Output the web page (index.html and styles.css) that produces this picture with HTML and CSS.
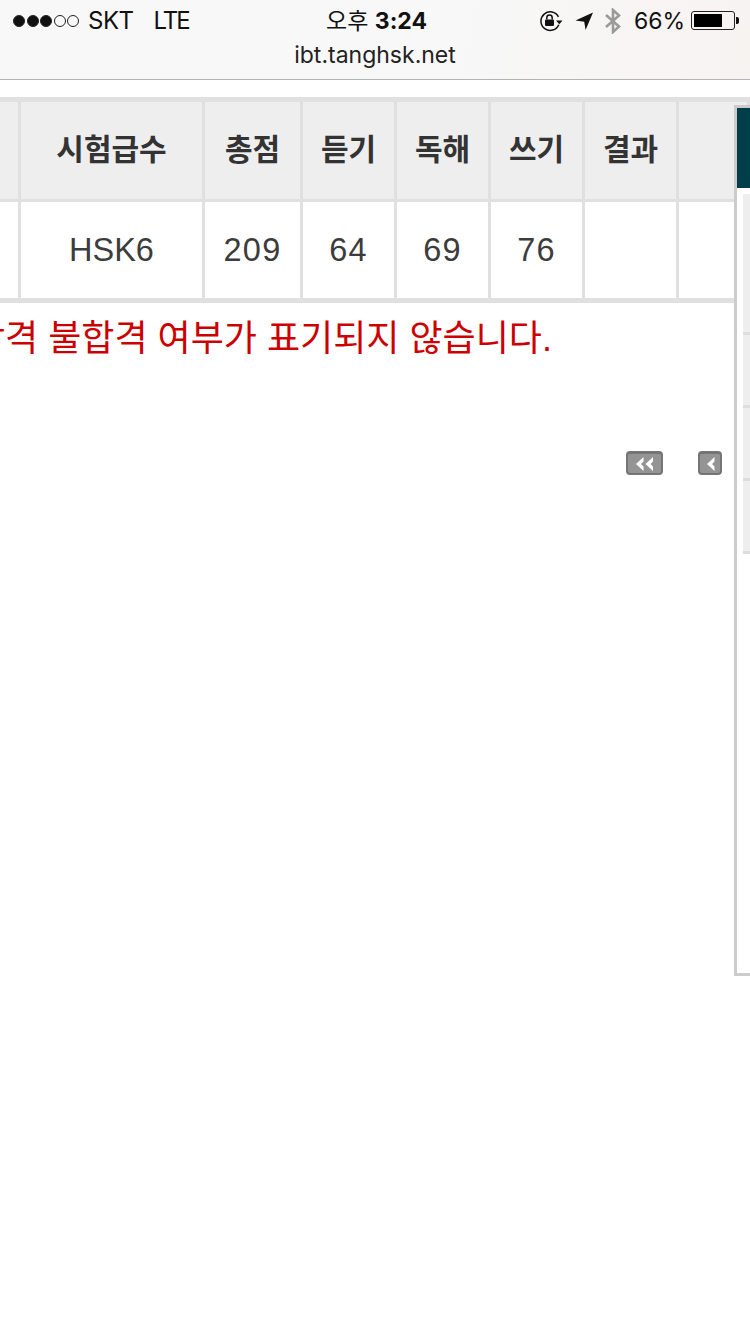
FILE: index.html
```html
<!DOCTYPE html>
<html lang="ko">
<head>
    <meta charset="UTF-8">
    <meta name="viewport" content="width=device-width, initial-scale=1.0">
    <title>ibt.tanghsk.net</title>
    <link rel="stylesheet" href="styles.css">
</head>
<body>
    <header class="browser-bar">
        <div class="status-row">
            <div class="status-left">
                <span class="signal">
                    <i class="dot on"></i><i class="dot on"></i><i class="dot on"></i><i class="dot"></i><i class="dot"></i>
                </span>
                <span class="carrier">SKT</span>
                <span class="network">LTE</span>
            </div>
            <div class="status-time">오후 <b>3:24</b></div>
            <div class="status-right">
                <svg class="icon-lock" width="24" height="22" viewBox="0 0 24 22">
                    <path d="M19.500 6.800A9.300 9.300 0 1 0 19.800 14.800" fill="none" stroke="#111" stroke-width="1.500"/>
                    <path d="M17 10.500h6.500l-3.200 3.800z" fill="#111"/>
                    <rect x="6" y="9.500" width="9" height="6.500" rx="1" fill="#111"/>
                    <path d="M7.800 9.500V7.800a2.700 2.700 0 0 1 5.400 0v1.700" fill="none" stroke="#111" stroke-width="1.500"/>
                </svg>
                <svg class="icon-arrow" width="18" height="18" viewBox="0 0 18 18">
                    <path d="M0.500 8.600L18 0.500L10.600 18L9.200 9.800z" fill="#111"/>
                </svg>
                <svg class="icon-bt" width="18" height="26" viewBox="0 0 18 26">
                    <path d="M2 7L15 18.500L9 24V2L15 7.500L2 19" fill="none" stroke="#9a9a9a" stroke-width="2.600"/>
                </svg>
                <span class="battery-pct">66%</span>
                <span class="battery"><span class="battery-level"></span></span>
                <span class="battery-tip"></span>
            </div>
        </div>
        <div class="url">ibt.tanghsk.net</div>
    </header>

    <main class="page">
        <table class="score-table">
            <thead>
                <tr>
                    <th class="col-first"></th>
                    <th class="col-level">시험급수</th>
                    <th class="col-total">총점</th>
                    <th class="col-part">듣기</th>
                    <th class="col-part">독해</th>
                    <th class="col-part">쓰기</th>
                    <th class="col-part">결과</th>
                    <th class="col-last"></th>
                </tr>
            </thead>
            <tbody>
                <tr>
                    <td></td>
                    <td>HSK6</td>
                    <td class="num">209</td>
                    <td class="num">64</td>
                    <td class="num">69</td>
                    <td class="num">76</td>
                    <td></td>
                    <td></td>
                </tr>
            </tbody>
        </table>

        <p class="notice">합격 불합격 여부가 표기되지 않습니다.</p>

        <div class="pager">
            <span class="page-btn wide">
                <svg width="24" height="16" viewBox="0 0 24 16"><path d="M10.500 1L3 8l7.500 7V10.500L8 8l2.500-2.500zM20 1L12.500 8l7.500 7V10.500L17.500 8 20 5.500z" fill="#fff"/></svg>
            </span>
            <span class="page-btn">
                <svg width="12" height="16" viewBox="0 0 12 16"><path d="M10.500 1L3 8l7.500 7V10.500L8 8l2.500-2.500z" fill="#fff"/></svg>
            </span>
        </div>

        <aside class="side-panel">
            <div class="side-head"></div>
            <div class="side-list">
                <div class="side-row first"></div>
                <div class="side-row"></div>
                <div class="side-row"></div>
                <div class="side-row"></div>
            </div>
        </aside>
    </main>
</body>
</html>
```

FILE: styles.css
```css
html, body {
    margin: 0;
    padding: 0;
    background: #fff;
}
body {
    width: 750px;
    height: 1334px;
    overflow: hidden;
    font-family: "Liberation Sans", "Noto Sans CJK KR", sans-serif;
    color: #333;
}

/* browser chrome */
.browser-bar {
    height: 79px;
    border-bottom: 1px solid #b4b4b4;
    background: linear-gradient(100deg, #f8f8f8 60%, #f7f3f1 100%);
    font-family: Inter, "Noto Sans CJK KR", sans-serif;
    color: #111;
}
.status-row {
    position: relative;
    display: flex;
    justify-content: space-between;
    align-items: center;
    height: 41px;
}
.status-left {
    display: flex;
    align-items: center;
    padding-left: 13px;
    font-size: 24px;
}
.signal {
    display: flex;
    gap: 1.500px;
    margin-right: 9px;
}
.dot {
    display: block;
    width: 12px;
    height: 12px;
    border: 1px solid #222;
    border-radius: 50%;
    box-sizing: border-box;
}
.dot.on {
    background: #111;
}
.carrier {
    margin-right: 20px;
    letter-spacing: -0.500px;
}
.network {
    letter-spacing: -2px;
}
.status-time {
    position: absolute;
    left: 326px;
    top: 7px;
    font-size: 23px;
    line-height: 28px;
}
.status-right {
    display: flex;
    align-items: center;
    padding-right: 11px;
}
.icon-lock {
    margin-right: 12px;
}
.icon-arrow {
    margin-right: 11px;
}
.icon-bt {
    margin-right: 12px;
}
.battery-pct {
    font-size: 23px;
    margin-right: 6px;
}
.battery {
    display: block;
    width: 44px;
    height: 19px;
    box-sizing: border-box;
    border: 1px solid #222;
    border-radius: 3px;
    padding: 2px;
}
.battery-level {
    display: block;
    width: 28px;
    height: 100%;
    background: #000;
}
.battery-tip {
    display: block;
    width: 3px;
    height: 7px;
    margin-left: 1px;
    background: #111;
    border-radius: 0 2px 2px 0;
}
.url {
    text-align: center;
    font-size: 23px;
    line-height: 28px;
    color: #222;
}

/* page content */
.page {
    position: relative;
    padding-top: 17px;
}
.score-table {
    width: 750px;
    table-layout: fixed;
    border-collapse: separate;
    border-spacing: 0;
    border-top: 5px solid #e0e0e0;
}
.score-table th,
.score-table td {
    box-sizing: border-box;
    padding: 0;
    text-align: center;
    border-right: 3px solid #e0e0e0;
    color: #333;
}
.score-table th {
    height: 100px;
    padding-bottom: 8px;
    background: #eee;
    border-bottom: 3px solid #e0e0e0;
    font-size: 30px;
    font-weight: bold;
}
.score-table td {
    height: 101px;
    background: #fff;
    border-bottom: 5px solid #e0e0e0;
    font-size: 32.500px;
    color: #3c3c3c;
}
.score-table td.num {
    letter-spacing: 1.200px;
}
.col-first { width: 21px; }
.col-level { width: 184px; }
.col-total { width: 98px; }
.col-part { width: 94px; }
.col-last { width: 71px; }

.notice {
    margin: 14px 0 0 -28px;
    font-size: 36px;
    line-height: 44px;
    color: #c00;
    white-space: nowrap;
}
.pager {
    display: flex;
    justify-content: flex-end;
    gap: 35px;
    margin-top: 90px;
    padding-right: 28px;
}
.page-btn {
    display: flex;
    align-items: center;
    justify-content: center;
    width: 24px;
    height: 24px;
    box-sizing: border-box;
    border-radius: 4px;
    background: #949494;
    border: 2px solid #757575;
    border-top-width: 3px;
}
.page-btn.wide {
    width: 37px;
}

/* side panel lies over the table */
.side-panel {
    position: absolute;
    left: 734px;
    top: 25px;
    width: 16px;
    height: 871px;
    box-sizing: border-box;
    background: #fff;
    border-left: 3px solid #ccc;
    border-top: 3px solid #ccc;
    border-bottom: 3px solid #ccc;
}
.side-head {
    height: 80px;
    background: #023e4a;
}
.side-list {
    margin: 6px 0 0 6px;
}
.side-row {
    height: 70px;
    background: #eee;
    border-bottom: 3px solid #ddd;
}
.side-row.first {
    height: 138px;
}
```
